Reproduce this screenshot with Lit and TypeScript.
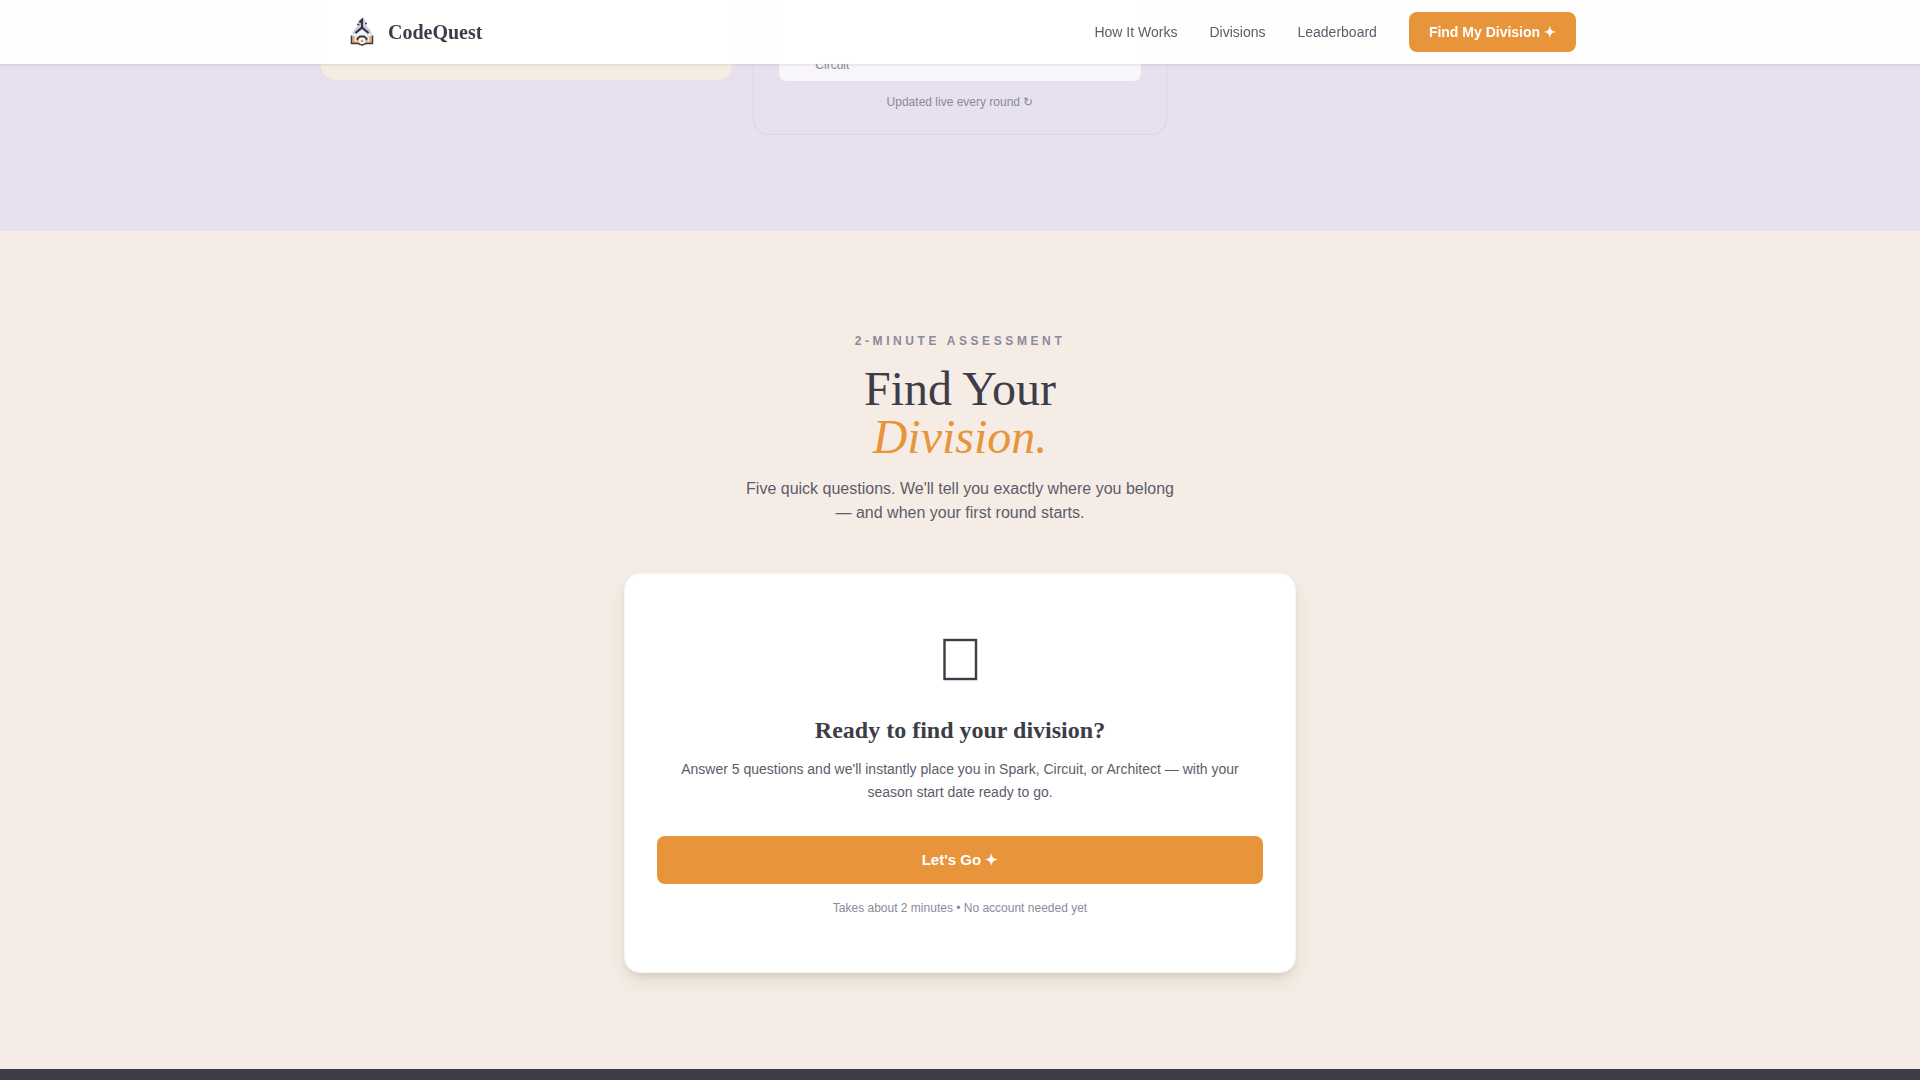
import { LitElement, html, css, svg } from "lit";
import { customElement } from "lit/decorators.js";

const logo = svg`
  <path d="M16 4.500 H20 L22.500 8 V11.500 L25.500 15 L27.500 19 V26 H8.500 V19 L10.500 15 L14 11.500 V8 Z" fill="#d3cfe3"/>
  <path d="M12.500 20 L18 16 L23.500 20 V27 H12.500 Z" fill="#f4f2fa"/>
  <path d="M10.500 20 V28 M25.500 20 V28" stroke="#fff" stroke-width="2"/>
  <path d="M9.500 22 V28.500 H14 L18 30.500 L22 28.500 H26.500 V22" fill="none" stroke="#e9ab72" stroke-width="2.500"/>
  <path d="M7.500 21.500 V29.500 H14 L18 31 L22 29.500 H28.500 V21.500" fill="none" stroke="#3a3a45" stroke-width="1.500"/>
  <path d="M11.500 19 L18 13.500 L24.500 19" fill="none" stroke="#35353f" stroke-width="2.200"/>
  <path d="M18 14.500 V6 L15.500 8.500" fill="none" stroke="#35353f" stroke-width="2.200"/>
  <path d="M13 10.500 H15.500 M21 9.500 H23" stroke="#4a4a58" stroke-width="1.500"/>
  <path d="M13.500 26.500 V24.500 L16 22.500 H20 L22.500 24.500 V26.500" fill="none" stroke="#35353f" stroke-width="1.800"/>
  <circle cx="18" cy="27" r="3" fill="#fff"/>
  <circle cx="18" cy="27" r="1.500" fill="#e8a050"/>`;

@customElement("app-root")
export class AppRoot extends LitElement {
  static styles = css`
    :host {
      display: flex;
      flex-direction: column;
      min-height: 100vh;
      background: #f5ede5;
      color: #3d3d4a;
      font-family: "Liberation Sans", Arial, sans-serif;
      font-size: 16px;
      line-height: 24px;
    }
    * { box-sizing: border-box; }
    h2, h3, p { margin: 0; }
    .top {
      position: fixed;
      inset: 0 0 auto;
      z-index: 10;
      background: rgba(255, 255, 255, 0.97);
      box-shadow: 0 1px 3px rgba(61, 61, 74, 0.12);
    }
    .bar {
      display: flex;
      align-items: center;
      justify-content: space-between;
      max-width: 1280px;
      height: 64px;
      margin: 0 auto;
      padding: 0 24px;
    }
    .brand {
      display: flex;
      align-items: center;
      gap: 8px;
      color: #3d3d4a;
      font: 700 20px/28px "Liberation Serif", "Times New Roman", serif;
      text-decoration: none;
    }
    .logo { width: 36px; height: 36px; }
    .links { display: flex; align-items: center; gap: 32px; }
    .link { color: #5c5c6b; font-size: 14px; line-height: 20px; text-decoration: none; }
    .btn {
      border: 0;
      border-radius: 8px;
      background: #e8943a;
      color: #fff;
      font-family: inherit;
      font-weight: 700;
      cursor: pointer;
    }
    .btn-small { padding: 10px 20px; font-size: 14px; line-height: 20px; }
    .btn-wide { width: 100%; margin: 32px 0 16px; padding: 12px; font-size: 15px; line-height: 24px; }
    .features { background: #e6e0ef; padding-bottom: 96px; }
    .grid {
      display: grid;
      grid-template-columns: repeat(3, 1fr);
      align-items: start;
      gap: 20px;
      max-width: 1280px;
      margin: 0 auto;
    }
    .tile { border: 1px solid transparent; border-top: 0; border-radius: 0 0 16px 16px; }
    .tile-cream { height: 81px; background: #f4ede1; border-color: #eae3e2; }
    .tile-board { padding: 0 25px 24px; border-color: #dcd6e6; }
    .entry {
      padding: 57px 12px 8px 36px;
      border-radius: 0 0 8px 8px;
      background: rgba(255, 255, 255, 0.7);
    }
    .small { color: #8a8a99; font-size: 12px; line-height: 16px; }
    .live { margin-top: 13px; text-align: center; }
    .quiz { padding: 96px 24px; text-align: center; }
    .eyebrow {
      margin-bottom: 10px;
      color: #8a8a99;
      font-size: 12px;
      font-weight: 700;
      line-height: 28px;
      letter-spacing: 0.3em;
      text-transform: uppercase;
    }
    .title { font: 400 48px/48px "Liberation Serif", "Times New Roman", serif; }
    .accent { display: block; color: #e8943a; }
    .lead { max-width: 448px; margin: 16px auto 48px; color: #5c5c6b; }
    .card {
      max-width: 672px;
      margin: 0 auto;
      padding: 56px 32px;
      border: 1px solid #f7f4f1;
      border-radius: 16px;
      background: #fff;
      box-shadow: 0 10px 20px -3px rgba(61, 61, 30, 0.1), 0 4px 6px -2px rgba(61, 61, 30, 0.12);
    }
    .glyph { display: block; width: 60px; height: 60px; margin: 0 auto 24px; }
    .card-title { font: 700 24px/32px "Liberation Serif", "Times New Roman", serif; }
    .card-text { max-width: 576px; margin: 12px auto 0; color: #5c5c6b; font-size: 14px; line-height: 23px; }
    .foot { flex: 1; min-height: 11px; background: #3d3d4a; }
  `;

  render() {
    return html`
      <header class="top">
        <div class="bar">
          <a class="brand" href="#">
            <svg class="logo" viewBox="0 0 36 36" aria-hidden="true">${logo}</svg>
            CodeQuest
          </a>
          <nav class="links">
            <a class="link" href="#how">How It Works</a>
            <a class="link" href="#divisions">Divisions</a>
            <a class="link" href="#leaderboard">Leaderboard</a>
            <button class="btn btn-small" type="button">Find My Division ✦</button>
          </nav>
        </div>
      </header>
      <section class="features" id="leaderboard">
        <div class="grid">
          <div class="tile tile-cream"></div>
          <div class="tile tile-board">
            <div class="entry small">Circuit</div>
            <p class="live small">Updated live every round ↻</p>
          </div>
        </div>
      </section>
      <section class="quiz">
        <p class="eyebrow">2-Minute Assessment</p>
        <h2 class="title">Find Your <em class="accent">Division.</em></h2>
        <p class="lead">Five quick questions. We'll tell you exactly where you belong — and when your first round starts.</p>
        <div class="card">
          <svg class="glyph" viewBox="0 0 60 60" aria-hidden="true">
            <rect x="14.500" y="10" width="31.500" height="39" fill="none" stroke="#3d3d4a" stroke-width="2.400"/>
          </svg>
          <h3 class="card-title">Ready to find your division?</h3>
          <p class="card-text">Answer 5 questions and we'll instantly place you in Spark, Circuit, or Architect — with your season start date ready to go.</p>
          <button class="btn btn-wide" type="button">Let's Go ✦</button>
          <p class="small">Takes about 2 minutes • No account needed yet</p>
        </div>
      </section>
      <footer class="foot"></footer>
    `;
  }
}
